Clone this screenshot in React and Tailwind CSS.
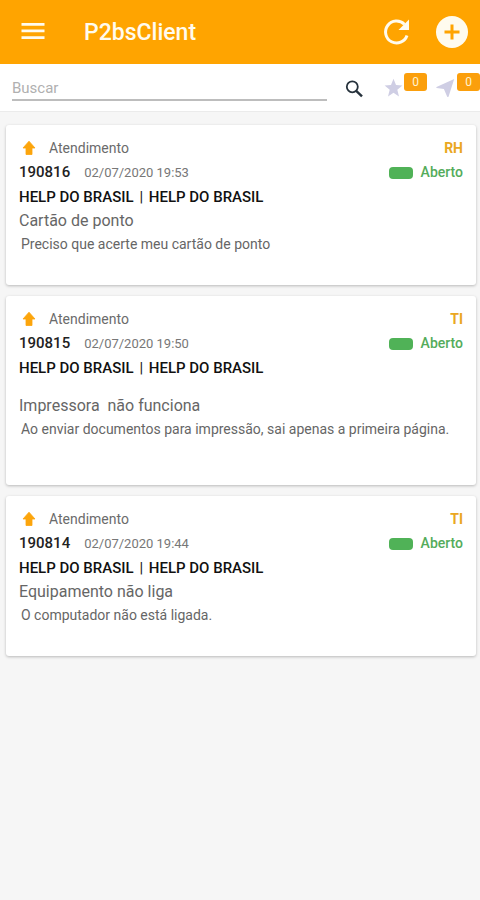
const tickets = [
  {
    id: "190816",
    date: "02/07/2020 19:53",
    area: "RH",
    title: "Cartão de ponto",
    text: "Preciso que acerte meu cartão de ponto",
  },
  {
    id: "190815",
    date: "02/07/2020 19:50",
    area: "TI",
    title: "Impressora  não funciona",
    text: "Ao enviar documentos para impressão, sai apenas a primeira página.",
    spaced: true,
  },
  {
    id: "190814",
    date: "02/07/2020 19:44",
    area: "TI",
    title: "Equipamento não liga",
    text: "O computador não está ligada.",
  },
];

function Header() {
  return (
    <header className="flex h-16 items-center bg-[#ffa400] pl-5 pr-3 text-[#fffbee]">
      <button type="button" aria-label="Menu" className="shrink-0">
        <svg viewBox="0 0 26 26" className="size-[26px]" fill="currentColor">
          <path d="M1.5 4h23v2.700h-23zM1.5 10.600h23v2.700h-23zM1.5 17.300h23v2.700h-23z" />
        </svg>
      </button>
      <h1 className="ml-[38px] flex-1 pt-0.5 text-[23px] font-medium leading-8">P2bsClient</h1>
      <button type="button" aria-label="Atualizar" className="mr-6">
        <svg viewBox="0 0 30 30" className="size-[30px]">
          <path
            d="M25 18.500A11 11 0 1 1 22.400 7.300"
            fill="none"
            stroke="currentColor"
            strokeWidth="3"
          />
          <path d="M27 2.500v10.500H16.500z" fill="currentColor" />
        </svg>
      </button>
      <button type="button" aria-label="Adicionar">
        <svg viewBox="0 0 32 32" className="size-8">
          <circle cx="16" cy="16" r="16" fill="currentColor" />
          <path d="M16 8.5v15M8.5 16h15" stroke="#ffa400" strokeWidth="3" />
        </svg>
      </button>
    </header>
  );
}

function Count() {
  return (
    <span className="h-[18px] w-[23px] rounded-[3px] bg-[#fb9f0c] text-center text-[12px] leading-[18px] text-[#fff3d0]">
      0
    </span>
  );
}

function SearchBar() {
  return (
    <div className="flex h-12 border-b border-[#ebebeb] bg-white pl-3">
      <input
        type="text"
        aria-label="Buscar"
        placeholder="Buscar"
        className="mt-2.5 h-[27px] min-w-0 flex-1 rounded-none border-b-2 border-[#bdbdbd] bg-transparent pt-0.5 text-[15px] leading-5 text-[#555] outline-none placeholder:text-[#b0b0b0]"
      />
      <button type="button" aria-label="Pesquisar" className="ml-[18px] mt-4 size-[18px]">
        <svg viewBox="0 0 18 18" className="size-[18px]" fill="none" stroke="#26323c">
          <circle cx="7.300" cy="6.800" r="5.500" strokeWidth="1.800" />
          <path d="M11.200 10.800l5.800 5.600" strokeWidth="2.400" />
        </svg>
      </button>
      <button type="button" aria-label="Favoritos" className="ml-5 mt-[9px] flex h-6 items-start gap-px">
        <svg viewBox="0 0 20 20" className="mt-[5px] size-5" fill="#cfcee4">
          <path d="M10.500 .8l2.500 6.300 6.400.4-5.100 4.200 1.700 6.700-5.500-3.700-5.500 3.700 1.700-6.700L1.600 7.500l6.400-.4z" />
        </svg>
        <Count />
      </button>
      <button type="button" aria-label="Enviados" className="ml-2 mt-[9px] flex h-6 items-start gap-0.5">
        <svg viewBox="0 0 20 20" className="mt-[5px] size-5" fill="#cfcee4">
          <path d="M19.200 1L1.500 9.100q-.6.800.2 1l7.200.8 3.200 7.500q.8 1 1.500 0z" />
        </svg>
        <Count />
      </button>
    </div>
  );
}

function Ticket({ ticket }) {
  return (
    <article className="rounded-[3px] bg-white px-[13px] pb-[29px] pt-[11px] shadow-[0_1px_3px_rgba(0,0,0,0.25)]">
      <div className="flex h-6 items-center">
        <svg viewBox="0 0 14 16" className="ml-[3px] h-4 w-[14px]" fill="#fca50c">
          <path d="M7 1.200l6 6.800h-3v6.500H4V8H1z" stroke="#fca50c" strokeWidth=".8" strokeLinejoin="round" />
        </svg>
        <span className="ml-[13px] flex-1 text-[14px] text-[#6b6b6b]">Atendimento</span>
        <span className="text-[14px] font-bold text-[#eaa721]">{ticket.area}</span>
      </div>
      <div className="flex h-[25px] items-center">
        <span className="text-[15px] font-medium text-[#222]">{ticket.id}</span>
        <time className="ml-3.5 flex-1 text-[13px] text-[#777]">{ticket.date}</time>
        <span className="mr-2 h-3 w-6 rounded-[4px] bg-[#50b257]" />
        <span className="text-[14px] font-medium text-[#54ac5b]">Aberto</span>
      </div>
      <h2 className="text-[15px] font-medium leading-6 text-[#111]">
        HELP DO BRASIL <span className="mx-0.5 font-normal">|</span> HELP DO BRASIL
      </h2>
      <h3
        className={`whitespace-pre-wrap text-[16px] leading-[23px] text-[#666] ${ticket.spaced ? "mt-[14px]" : ""}`}
      >
        {ticket.title}
      </h3>
      <p className={`pl-[2px] text-[14px] leading-6 text-[#666] ${ticket.spaced ? "pb-[15px]" : ""}`}>
        {ticket.text}
      </p>
    </article>
  );
}

export default function App() {
  return (
    <div className="min-h-screen bg-[#f6f6f6] font-['Roboto',sans-serif]">
      <Header />
      <SearchBar />
      <main className="flex flex-col gap-[11px] pl-1.5 pr-1 pt-[13px]">
        {tickets.map((ticket) => (
          <Ticket key={ticket.id} ticket={ticket} />
        ))}
      </main>
    </div>
  );
}
